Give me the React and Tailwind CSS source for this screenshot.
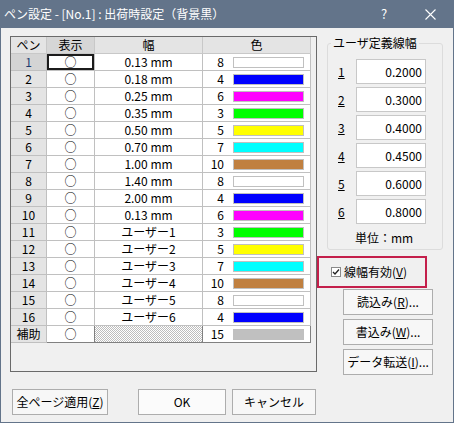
import React from "react";

const ROWS = [
  ["1", "0.13 mm", "8", "#ffffff"],
  ["2", "0.18 mm", "4", "#0000ff"],
  ["3", "0.25 mm", "6", "#ff00ff"],
  ["4", "0.35 mm", "3", "#00ff00"],
  ["5", "0.50 mm", "5", "#ffff00"],
  ["6", "0.70 mm", "7", "#00ffff"],
  ["7", "1.00 mm", "10", "#c08040"],
  ["8", "1.40 mm", "8", "#ffffff"],
  ["9", "2.00 mm", "4", "#0000ff"],
  ["10", "0.13 mm", "6", "#ff00ff"],
  ["11", "ユーザー1", "3", "#00ff00"],
  ["12", "ユーザー2", "5", "#ffff00"],
  ["13", "ユーザー3", "7", "#00ffff"],
  ["14", "ユーザー4", "10", "#c08040"],
  ["15", "ユーザー5", "8", "#ffffff"],
  ["16", "ユーザー6", "4", "#0000ff"],
];

const WIDTHS = ["0.2000", "0.3000", "0.4000", "0.4500", "0.6000", "0.8000"];

function Btn({ children, className = "" }) {
  return (
    <div className={`h-[26px] flex items-center justify-center border border-[#adadad] bg-[#f7f7f7] text-[12px] text-black ${className}`}>
      {children}
    </div>
  );
}

function Row({ pen, width, num, color, first }) {
  return (
    <div className="flex h-[17px]">
      <div className={`w-[36px] border-r border-b border-[#c0c0c0] flex items-center justify-center ${first ? "bg-[#d4d4d4] text-[#1c3c70]" : "bg-[#e4e4e4]"}`}>
        {pen}
      </div>
      <div className={`w-[48px] border-r border-b border-[#c0c0c0] bg-white flex items-center justify-center ${first ? "shadow-[inset_0_0_0_2px_#1b1b1b]" : ""}`}>
        ○
      </div>
      <div className="w-[108px] border-r border-b border-[#c0c0c0] bg-white flex items-center justify-center">
        {width}
      </div>
      <div className="w-[108px] border-r border-b border-[#c0c0c0] bg-white flex items-center">
        <span className="w-[21px] text-right">{num}</span>
        <span className="ml-[9px] w-[71px] h-[11px] border border-[#c0c0c0]" style={{ backgroundColor: color }} />
      </div>
    </div>
  );
}

export default function App() {
  return (
    <div className="w-[454px] h-[423px] bg-[#63748a] flex flex-col px-px pb-px font-['Noto_Sans_CJK_JP',sans-serif] text-[12px] text-black overflow-hidden">
      {/* title bar */}
      <div className="h-[28px] flex items-center text-white text-[12px] pl-[3px]">
        <span>ペン設定 - [No.1] : 出荷時設定（背景黒）</span>
        <span className="ml-auto w-[46px] text-center text-[13px]">?</span>
        <span className="w-[46px] flex justify-center">
          <svg width="11" height="11" viewBox="0 0 11 11" stroke="white" strokeWidth="1.1" fill="none">
            <path d="M0.5 0.5 L10.5 10.5 M10.5 0.5 L0.5 10.5" />
          </svg>
        </span>
      </div>

      <div className="flex-1 bg-[#f0f0f0] flex flex-col">
        <div className="flex">
          {/* pen table */}
          <div className="ml-[9px] mt-[8px] w-[307px] h-[336px] border border-[#6a6a6a] bg-[#f0f0f0]">
            <div className="w-[300px] leading-none">
              <div className="flex h-[17px]">
                <div className="w-[36px] border-r border-b border-[#c8c8c8] bg-[#e4e4e4] flex items-center justify-center">ペン</div>
                <div className="w-[48px] border-r border-b border-[#c8c8c8] bg-[#d6d6d6] flex items-center justify-center">表示</div>
                <div className="w-[108px] border-r border-b border-[#c8c8c8] bg-[#e4e4e4] flex items-center justify-center">幅</div>
                <div className="w-[108px] border-r border-b border-[#c8c8c8] bg-[#e4e4e4] flex items-center justify-center">色</div>
              </div>
              {ROWS.map((r, i) => (
                <Row key={i} pen={r[0]} width={r[1]} num={r[2]} color={r[3]} first={i === 0} />
              ))}
              <div className="flex h-[17px]">
                <div className="w-[36px] border-r border-b border-[#c0c0c0] bg-[#e4e4e4] flex items-center justify-center">補助</div>
                <div className="w-[48px] border-r border-b border-[#808080] bg-white flex items-center justify-center">○</div>
                <div className="w-[108px] border-r border-b border-[#808080] bg-[repeating-conic-gradient(#bdbdbd_0_25%,#ffffff_0_50%)] bg-[length:2px_2px]" />
                <div className="w-[108px] border-r border-b border-[#808080] bg-white flex items-center">
                  <span className="w-[21px] text-right">15</span>
                  <span className="ml-[9px] w-[71px] h-[11px] bg-[#c0c0c0]" />
                </div>
              </div>
            </div>
          </div>

          {/* right column */}
          <div className="flex flex-col">
            <div className="ml-[10px] mt-[15px] w-[116px] h-[207px] border border-[#dcdcdc] rounded-[3px] relative flex flex-col">
              <span className="absolute -top-[9px] left-[3px] px-[2px] bg-[#f0f0f0] leading-[16px]">ユーザ定義線幅</span>
              <div className="flex flex-col gap-[3px] mt-[15px]">
                {WIDTHS.map((w, i) => (
                  <div key={i} className="flex items-center h-[25px]">
                    <span className="w-[28px] pl-[10px] underline">{i + 1}</span>
                    <div className="w-[70px] h-[25px] border border-[#c8c8c8] bg-white flex items-center justify-end pr-[3px]">{w}</div>
                  </div>
                ))}
              </div>
              <div className="mt-[5px] pl-[27px]">単位：mm</div>
            </div>

            <div className="mt-[6px] w-[110px] h-[32px] border-2 border-[#c41f4b] flex items-center pl-[12px]">
              <span className="w-[10px] h-[10px] border border-[#8a8a8a] bg-white flex items-center justify-center">
                <svg width="8" height="8" viewBox="0 0 8 8" fill="none" stroke="#222" strokeWidth="1.3">
                  <path d="M1 4 L3 6 L7 1.5" />
                </svg>
              </span>
              <span className="ml-[3px] text-[12px]">線幅有効(<span className="underline">V</span>)</span>
            </div>

            <div className="ml-[26px] mt-px flex flex-col gap-[4px] w-[90px]">
              <Btn>読込み(<span className="underline">R</span>)...</Btn>
              <Btn>書込み(<span className="underline">W</span>)...</Btn>
              <Btn>データ転送(<span className="underline">I</span>)...</Btn>
            </div>
          </div>
        </div>

        {/* bottom buttons */}
        <div className="flex mt-[14px]">
          <Btn className="ml-[11px] w-[96px]">全ページ適用(<span className="underline">Z</span>)</Btn>
          <Btn className="ml-[30px] w-[88px] border-[#3c5ad0] bg-[#fbfbfb]">OK</Btn>
          <Btn className="ml-[6px] w-[84px]">キャンセル</Btn>
        </div>
      </div>
    </div>
  );
}
